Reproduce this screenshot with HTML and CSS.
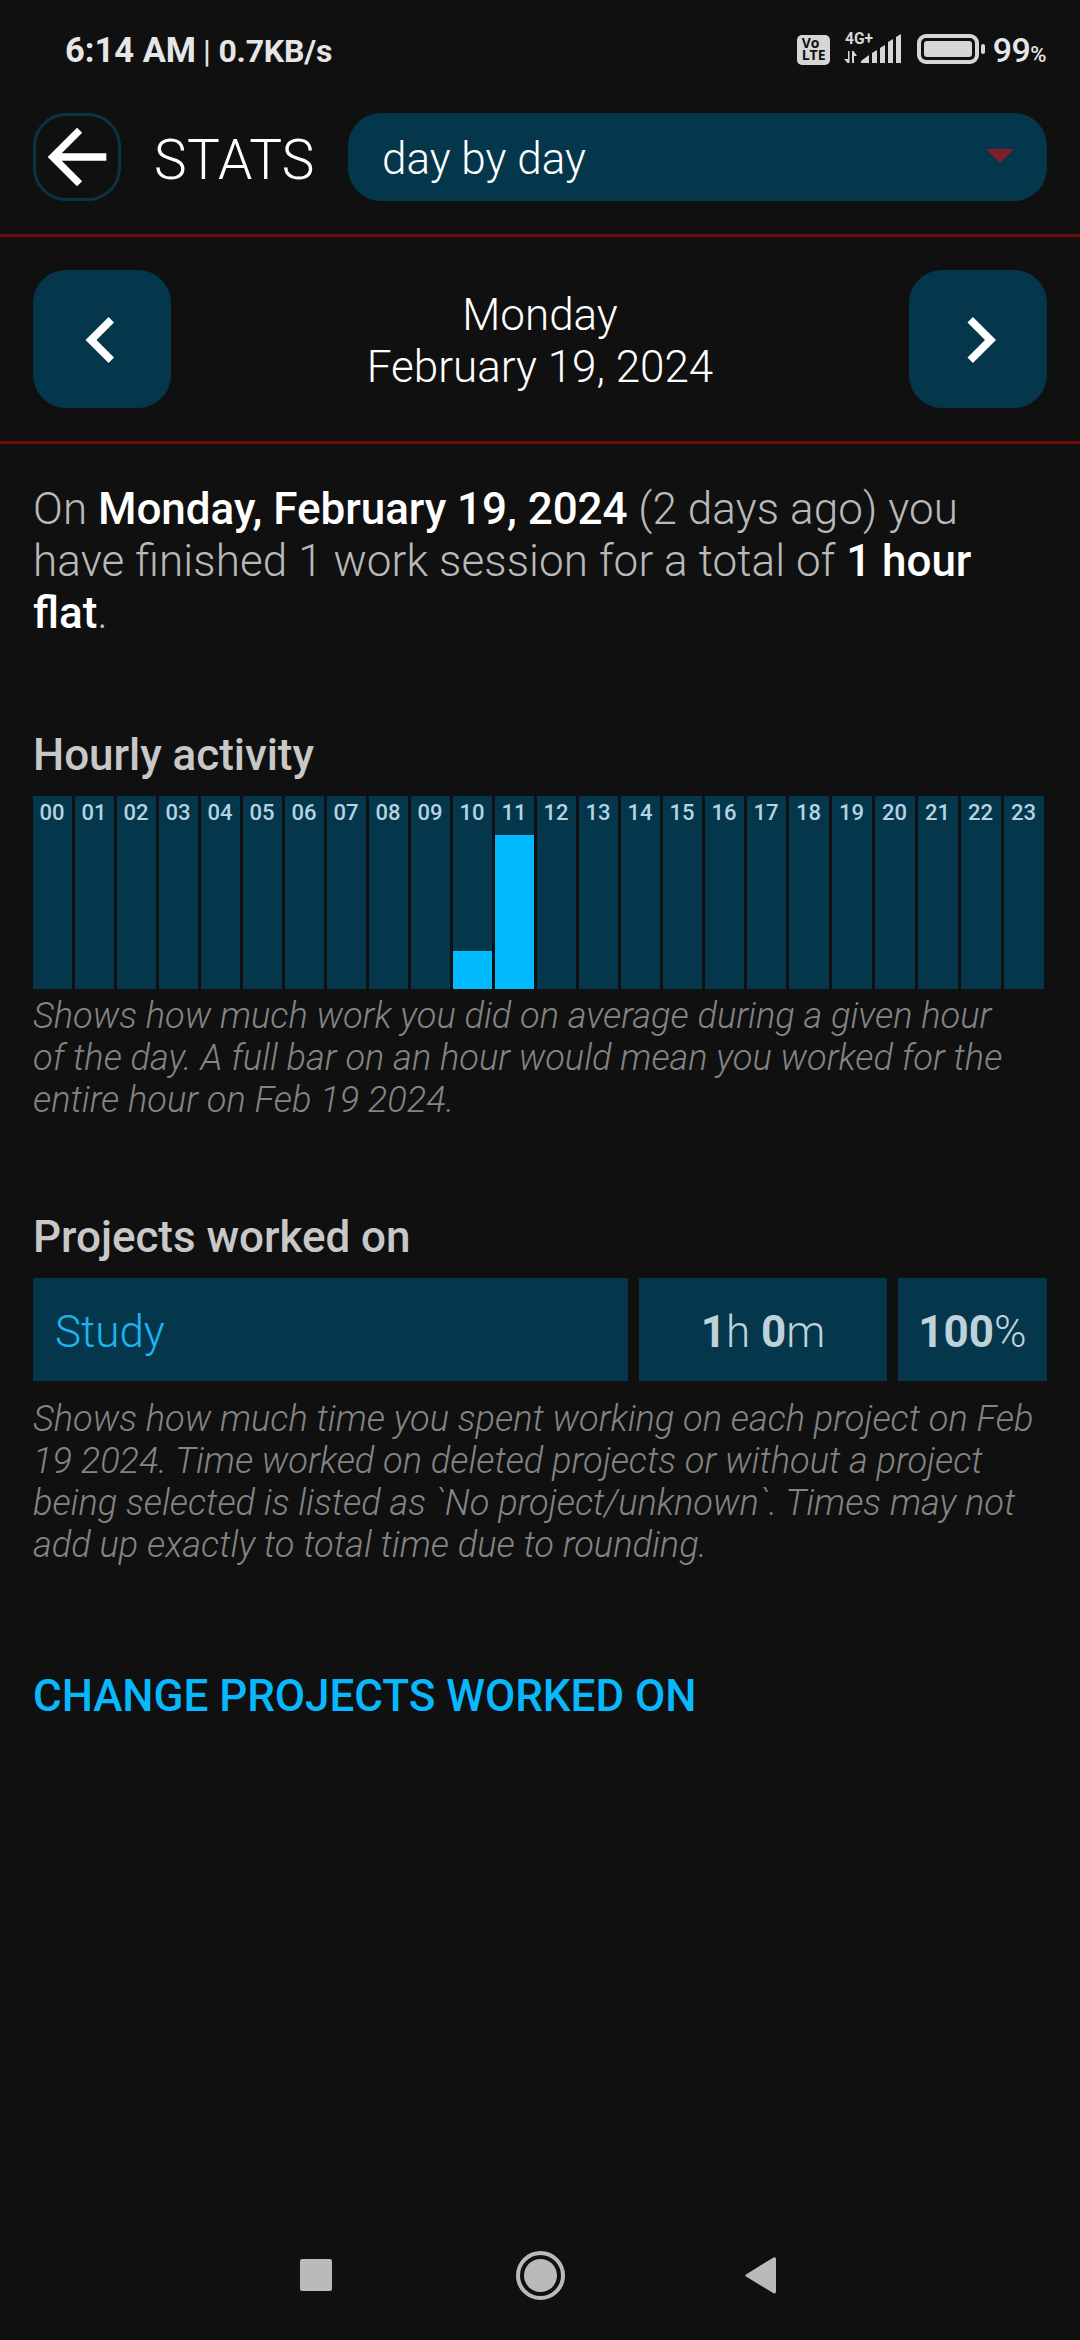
FILE: index.html
```
<!DOCTYPE html>
<html lang="en">
<head>
    <meta charset="utf-8">
    <meta name="viewport" content="width=device-width, initial-scale=1">
    <title>Stats</title>
    <link rel="stylesheet" href="styles.css">
</head>
<body>
    <div class="status-bar">
        <div class="status-left">
            <span class="clock">6:14 AM</span>
            <span class="net-speed"><span class="sep">|</span> 0.7KB/s</span>
        </div>
        <div class="status-right">
            <div class="volte"><span>Vo</span><span>LTE</span></div>
            <svg class="signal" width="60" height="36" viewBox="0 0 60 36">
                <text class="signal-text" x="1" y="14" textLength="28" lengthAdjust="spacingAndGlyphs">4G+</text>
                <path d="M4 21h1.500v12h-2l-3.500-4h4zM8 21h1.500l3.500 5h-3v7h-2z"/>
                <path d="M17 33v-2l8-6v8zM28 33v-10l5-3v13zM36 33v-15l5-3v18zM44 33v-21l5-3v24zM52 33v-26l5-3v29z"/>
            </svg>
            <svg class="battery" width="70" height="30" viewBox="0 0 70 30">
                <rect class="battery-shell" x="2" y="2" width="58" height="26" rx="7"/>
                <rect x="7" y="7" width="48" height="16" rx="3"/>
                <rect x="64" y="10" width="4" height="10" rx="2"/>
            </svg>
            <div class="percent">99<small>%</small></div>
        </div>
    </div>

    <div class="header">
        <button class="back" aria-label="Back">
            <svg width="88" height="88" viewBox="0 0 24 24"><path d="M20 11H7.83l5.59-5.59L12 4l-8 8 8 8 1.410-1.410L7.830 13H20v-2z"/></svg>
        </button>
        <h1>STATS</h1>
        <div class="select">
            <span>day by day</span>
            <svg width="28" height="14" viewBox="0 0 28 14"><path d="M0 0h28L14 14z"/></svg>
        </div>
    </div>

    <div class="date-nav">
        <button class="nav-button" aria-label="Previous day">
            <svg width="138" height="138" viewBox="0 0 138 138"><path d="M81 52.500l-5.400-5.500L52.500 70l23.100 23 5.400-5.500L63.500 70z"/></svg>
        </button>
        <div class="date">Monday<br>February 19, 2024</div>
        <button class="nav-button" aria-label="Next day">
            <svg width="138" height="138" viewBox="0 0 138 138"><path d="M58.500 52.500l5.400-5.500L87 70 63.900 93l-5.400-5.500L76 70z"/></svg>
        </button>
    </div>

    <div class="content">
        <p class="summary">On <strong>Monday, February 19, 2024</strong> (2 days ago) you have finished 1 work session for a total of <strong>1 hour flat</strong>.</p>

        <h2>Hourly activity</h2>
        <div class="chart">
            <div class="hour">00</div>
            <div class="hour">01</div>
            <div class="hour">02</div>
            <div class="hour">03</div>
            <div class="hour">04</div>
            <div class="hour">05</div>
            <div class="hour">06</div>
            <div class="hour">07</div>
            <div class="hour">08</div>
            <div class="hour">09</div>
            <div class="hour">10<div class="bar" style="height: 38px"></div></div>
            <div class="hour">11<div class="bar" style="height: 154px"></div></div>
            <div class="hour">12</div>
            <div class="hour">13</div>
            <div class="hour">14</div>
            <div class="hour">15</div>
            <div class="hour">16</div>
            <div class="hour">17</div>
            <div class="hour">18</div>
            <div class="hour">19</div>
            <div class="hour">20</div>
            <div class="hour">21</div>
            <div class="hour">22</div>
            <div class="hour">23</div>
        </div>
        <p class="hint chart-hint">Shows how much work you did on average during a given hour of the day. A full bar on an hour would mean you worked for the entire hour on Feb 19 2024.</p>

        <h2>Projects worked on</h2>
        <div class="project">
            <div class="cell name">Study</div>
            <div class="cell"><b>1</b>h&nbsp;<b>0</b>m</div>
            <div class="cell"><b>100</b>%</div>
        </div>
        <p class="hint project-hint">Shows how much time you spent working on each project on Feb 19 2024. Time worked on deleted projects or without a project being selected is listed as `No project/unknown`. Times may not add up exactly to total time due to rounding.</p>

        <a class="change">CHANGE PROJECTS WORKED ON</a>
    </div>

    <div class="system-nav">
        <svg width="50" height="50" viewBox="0 0 50 50"><rect x="9" y="9" width="32" height="32" rx="2"/></svg>
        <svg width="50" height="50" viewBox="0 0 50 50"><circle class="ring" cx="25.500" cy="25.500" r="22.500"/><circle cx="25.500" cy="25.500" r="16.500"/></svg>
        <svg width="50" height="50" viewBox="0 0 50 50"><path d="M7 24.500L34.500 7.500Q37 6.500 37 9v32.500q0 2.500-2.500 1.700L7 26.500q-1.500-1 0-2z"/></svg>
    </div>
</body>
</html>
```
FILE: styles.css
```
* {
    box-sizing: border-box;
}
body {
    margin: 0;
    height: 2340px;
    display: flex;
    flex-direction: column;
    background-color: #101010;
    color: #fff;
    font-family: Roboto, sans-serif;
    font-size: 44px;
    font-weight: 300;
    line-height: 52px;
}
h1, h2, p {
    margin: 0;
}
svg {
    display: block;
    flex: none;
}
button {
    padding: 0;
    border: none;
    flex: none;
}

/* status bar */
.status-bar {
    height: 113px;
    padding: 30px 34px 0 65px;
    display: flex;
    justify-content: space-between;
    align-items: flex-start;
    line-height: 40px;
    color: #e6e6e6;
}
.status-left {
    display: flex;
    align-items: baseline;
    gap: 7px;
}
.clock {
    font-size: 34.5px;
    font-weight: 700;
}
.net-speed {
    font-size: 32px;
    font-weight: 700;
    letter-spacing: -0.2px;
}
.sep {
    font-weight: 400;
}
.status-right {
    display: flex;
}
.status-right svg {
    fill: #d6d6d6;
}
.volte {
    width: 33px;
    height: 30px;
    margin-top: 5px;
    padding: 2px 0 0 5px;
    border-radius: 5px;
    background-color: #d6d6d6;
    color: #101010;
    font-family: "Open Sans", sans-serif;
    font-size: 14px;
    font-weight: 700;
    line-height: 12px;
}
.volte span {
    display: block;
}
.signal {
    margin-left: 14px;
}
.signal-text {
    font-size: 16.5px;
    font-weight: 700;
}
.battery {
    margin: 4px 0 0 13px;
}
.battery-shell {
    fill: none;
    stroke: #d6d6d6;
    stroke-width: 4;
}
.percent {
    margin-left: 6px;
    font-size: 34px;
    font-weight: 500;
    letter-spacing: -0.5px;
}
.percent small {
    font-size: 22px;
}

/* header */
.header {
    height: 124px;
    padding: 0 33px;
    display: flex;
    align-items: flex-start;
    border-bottom: 3px solid #700909;
}
.back {
    width: 88px;
    height: 88px;
    border-radius: 33px;
    background: none;
    box-shadow: inset 0 0 0 3px #0b3346;
}
.back svg, .nav-button svg {
    fill: #fff;
}
h1 {
    width: 227px;
    padding: 3px 0 0 33px;
    font-size: 55px;
    font-weight: 300;
    letter-spacing: 0.3px;
    line-height: 88px;
}
.select {
    flex: 1;
    height: 88px;
    padding: 0 33px 0 34px;
    display: flex;
    justify-content: space-between;
    align-items: center;
    border-radius: 33px;
    background-color: #04374c;
}
.select span {
    padding-top: 4px;
}
.select svg {
    margin-top: -2px;
    fill: #7f1e28;
}

/* day switcher */
.date-nav {
    height: 207px;
    padding: 0 33px;
    display: flex;
    justify-content: space-between;
    align-items: center;
    border-bottom: 3px solid #700909;
}
.nav-button {
    width: 138px;
    height: 138px;
    border-radius: 33px;
    background-color: #04374c;
}
.date {
    padding-top: 4px;
    text-align: center;
}

/* content */
.content {
    flex: 1;
    padding: 39px 33px 0;
}
.summary {
    color: #b9b9b9;
    letter-spacing: 0.1px;
    font-feature-settings: "liga";
}
.summary strong {
    color: #fff;
    font-weight: 500;
    letter-spacing: -0.05px;
}
h2 {
    margin-top: 90px;
    color: #c8c8c8;
    font-size: 44px;
    font-weight: 500;
    letter-spacing: -0.05px;
}
.chart {
    height: 193px;
    margin-top: 15px;
    display: grid;
    grid-template-columns: repeat(18, 39px) repeat(6, 40px);
    gap: 3px;
}
.hour {
    padding-top: 4px;
    display: flex;
    flex-direction: column;
    justify-content: space-between;
    background-color: #04374c;
    color: #b6d3e0;
    font-size: 22px;
    font-weight: 500;
    line-height: 26px;
    text-align: center;
    text-indent: -1px;
}
.bar {
    background-color: #00b9ff;
}
.hint {
    color: #848484;
    font-size: 36.2px;
    font-style: italic;
    line-height: 42px;
}
.chart-hint {
    max-width: 985px;
    margin-top: 6px;
}
.project {
    height: 103px;
    margin-top: 15px;
    display: grid;
    grid-template-columns: 595px 248px 149px;
    gap: 11px;
}
.cell {
    padding-top: 4px;
    display: flex;
    justify-content: center;
    align-items: center;
    background-color: #04374c;
    color: #bfd1d9;
}
.cell b {
    font-weight: 700;
}
.cell.name {
    justify-content: flex-start;
    padding-left: 22px;
    color: #1db4f2;
}
.project-hint {
    margin-top: 17px;
}
.change {
    display: block;
    margin-top: 104px;
    color: #08b7fc;
    font-weight: 500;
    letter-spacing: -0.05px;
}

/* android buttons */
.system-nav {
    height: 90px;
    padding: 0 291px;
    display: flex;
    justify-content: space-between;
    fill: #bababa;
}
.ring {
    fill: none;
    stroke: #bababa;
    stroke-width: 4;
}
```
